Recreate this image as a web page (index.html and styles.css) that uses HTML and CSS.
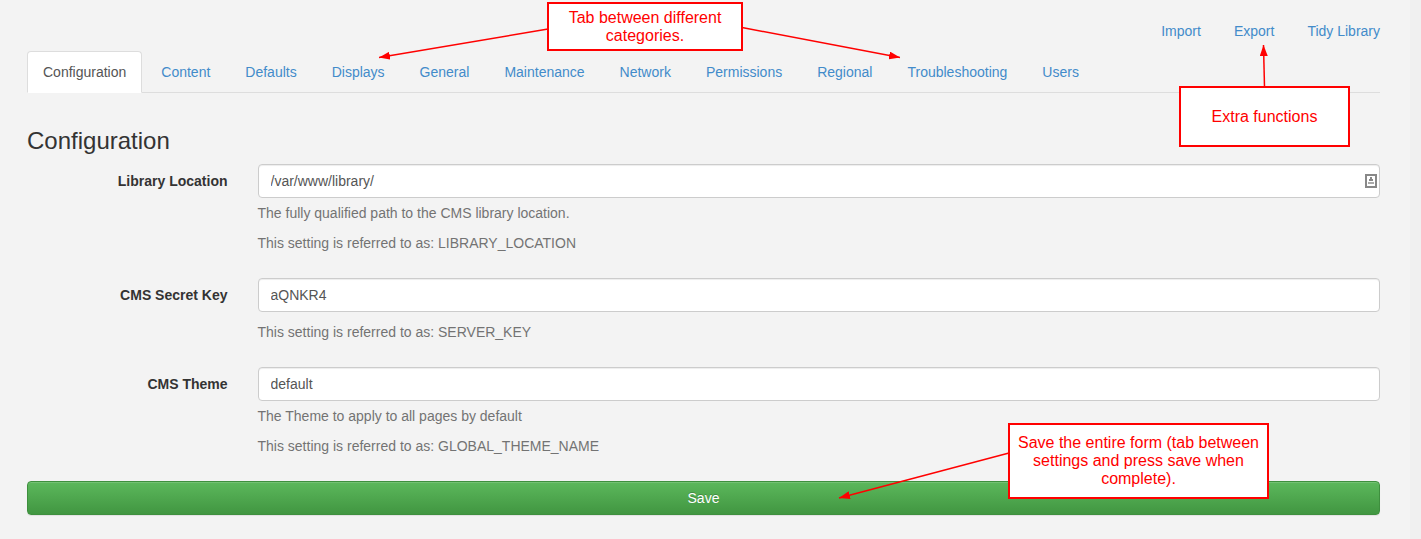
FILE: index.html
```html
<!DOCTYPE html>
<html lang="en">
<head>
<meta charset="utf-8">
<title>Settings</title>
<link rel="stylesheet" href="styles.css">
</head>
<body>
<main class="page">
  <nav class="actions" aria-label="Extra functions">
    <a href="#import">Import</a>
    <a href="#export">Export</a>
    <a href="#tidy">Tidy Library</a>
  </nav>
  <nav class="tabs" aria-label="Categories">
    <a class="tab tab-active" href="#configuration" aria-current="page">Configuration</a>
    <a class="tab" href="#content">Content</a>
    <a class="tab" href="#defaults">Defaults</a>
    <a class="tab" href="#displays">Displays</a>
    <a class="tab" href="#general">General</a>
    <a class="tab" href="#maintenance">Maintenance</a>
    <a class="tab" href="#network">Network</a>
    <a class="tab" href="#permissions">Permissions</a>
    <a class="tab" href="#regional">Regional</a>
    <a class="tab" href="#troubleshooting">Troubleshooting</a>
    <a class="tab" href="#users">Users</a>
  </nav>
  <form class="settings">
    <h1 class="title">Configuration</h1>
    <div class="row">
      <label class="label" for="library">Library Location</label>
      <div class="field">
        <div class="control">
          <input class="input" id="library" type="text" value="/var/www/library/">
          <svg class="autofill" width="12" height="14" viewBox="0 0 12 14" aria-hidden="true">
            <rect x="1" y="1" width="10" height="12" fill="#fff" stroke="#888" stroke-width="2"/>
            <path d="M5 3h2v2h1v2H4V5h1z" fill="#888"/>
            <path d="M3 8h6v2H3z" fill="#aaa"/>
          </svg>
        </div>
        <p class="help">The fully qualified path to the CMS library location.</p>
        <p class="help">This setting is referred to as: LIBRARY_LOCATION</p>
      </div>
    </div>
    <div class="row">
      <label class="label" for="secret">CMS Secret Key</label>
      <div class="field">
        <input class="input" id="secret" type="text" value="aQNKR4">
        <p class="help help-spaced">This setting is referred to as: SERVER_KEY</p>
      </div>
    </div>
    <div class="row">
      <label class="label" for="theme">CMS Theme</label>
      <div class="field">
        <input class="input" id="theme" type="text" value="default">
        <p class="help">The Theme to apply to all pages by default</p>
        <p class="help">This setting is referred to as: GLOBAL_THEME_NAME</p>
      </div>
    </div>
    <button class="save" type="submit">Save</button>
  </form>
</main>
<svg class="arrows" width="1400" height="539" viewBox="0 0 1400 539" aria-hidden="true">
  <defs>
    <marker id="head" markerUnits="userSpaceOnUse" markerWidth="12" markerHeight="8" refX="11" refY="4" orient="auto">
      <path d="M0 0L11 4L0 8z" fill="#f00" stroke="none"/>
    </marker>
  </defs>
  <g stroke="#f00" stroke-width="1.5">
    <path d="M548 29L379 57.5" marker-end="url(#head)"/>
    <path d="M742 27.5L900 57.5" marker-end="url(#head)"/>
    <path d="M1264.5 87L1263.5 45" marker-end="url(#head)"/>
    <path d="M1009 453L839 498" marker-end="url(#head)"/>
  </g>
</svg>
<div class="callout callout-tabs">Tab between different categories.</div>
<div class="callout callout-extra">Extra functions</div>
<div class="callout callout-save">Save the entire form (tab between settings and press save when complete).</div>
</body>
</html>
```
FILE: styles.css
```css
* {
  box-sizing: border-box;
}

body {
  position: relative;
  margin: 0;
  min-height: 100vh;
  border-right: 11px solid #f0f0f0;
  background: #f3f3f3;
  color: #333;
  font: 14px/20px "Liberation Sans", Arial, sans-serif;
}

a {
  color: #428bca;
  text-decoration: none;
}

.page {
  padding: 11px 30px 24px 27px;
}

.actions {
  display: flex;
  justify-content: flex-end;
  gap: 33px;
  padding: 10px 0;
}

.tabs {
  display: flex;
  gap: 3px;
  border-bottom: 1px solid #ddd;
}

.tab {
  margin-bottom: -1px;
  padding: 10px 15px;
  border: 1px solid transparent;
  border-radius: 4px 4px 0 0;
}

.tab-active {
  border-color: #ddd #ddd #fff;
  background: #fff;
  color: #555;
}

.settings {
  padding-top: 35px;
}

.title {
  margin: 0 0 10px;
  font-size: 24px;
  line-height: 26px;
  font-weight: 400;
}

.row {
  display: grid;
  grid-template-columns: repeat(12, minmax(0, 1fr));
  column-gap: 30px;
  margin-bottom: 15px;
}

.label {
  grid-column: span 2;
  padding-top: 7px;
  text-align: right;
  font-weight: 700;
}

.field {
  display: flow-root;
  grid-column: span 10;
}

.control {
  position: relative;
}

.input {
  display: block;
  width: 100%;
  height: 34px;
  padding: 6px 12px;
  border: 1px solid #ccc;
  border-radius: 4px;
  background: #fff;
  box-shadow: inset 0 1px 1px rgba(0, 0, 0, 0.075);
  color: #555;
  font: inherit;
}

.autofill {
  position: absolute;
  top: 10px;
  right: 3px;
}

.help {
  margin: 5px 0 10px;
  color: #737373;
}

.help-spaced {
  margin-top: 10px;
}

.save {
  display: block;
  width: 100%;
  height: 34px;
  padding: 6px 12px;
  border: 1px solid #3e8f3e;
  border-radius: 4px;
  background: linear-gradient(#5cb85c, #419641);
  box-shadow: inset 0 1px 0 rgba(255, 255, 255, 0.15), 0 1px 1px rgba(0, 0, 0, 0.075);
  color: #fff;
  font: inherit;
  text-shadow: 0 -1px 0 rgba(0, 0, 0, 0.2);
}

/* Annotations laid over the page */
.arrows {
  position: absolute;
  top: 0;
  left: 0;
  fill: none;
  pointer-events: none;
}

.callout {
  position: absolute;
  display: flex;
  align-items: center;
  justify-content: center;
  padding: 0 4px;
  border: 2px solid #f00;
  background: #fff;
  color: #f00;
  font-size: 16px;
  line-height: 18px;
  text-align: center;
}

.callout-tabs {
  top: 2px;
  left: 547px;
  width: 196px;
  height: 49px;
}

.callout-extra {
  top: 86px;
  left: 1179px;
  width: 171px;
  height: 61px;
}

.callout-save {
  top: 423px;
  left: 1008px;
  width: 261px;
  height: 76px;
}
```
